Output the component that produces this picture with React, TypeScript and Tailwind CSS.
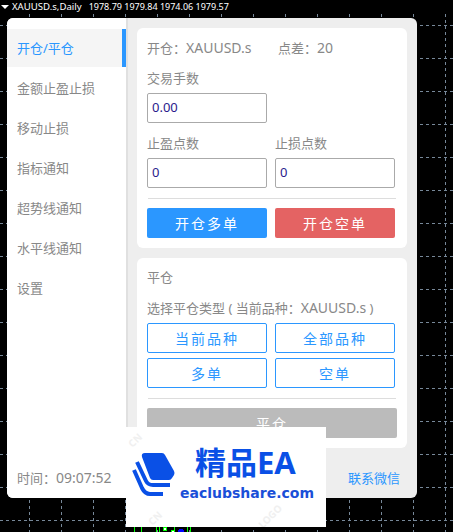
const font = { fontFamily: '"Noto Sans", "Noto Sans CJK SC", sans-serif' };

function Chart() {
  const xs = Array.from({ length: 14 }, (_, i) => 29 + i * 32);
  const ys = Array.from({ length: 16 }, (_, i) => 25 + i * 33);
  return (
    <svg className="absolute inset-0" width={453} height={532} shapeRendering="crispEdges">
      {xs.map((x) => (
        <line key={x} x1={x + 0.5} x2={x + 0.5} y1={14} y2={532} stroke="#778899" strokeDasharray="3 3" />
      ))}
      {ys.map((y) => (
        <line key={y} x1={0} x2={453} y1={y + 0.5} y2={y + 0.5} stroke="#778899" strokeDasharray="3 3" />
      ))}
      <path d="M134 527v5M141 527v5M156 527v5M159 527v5M174 527v5M187 527v5M190 527v5" stroke="#00ff00" fill="none" />
      <rect x="163.5" y="527.5" width="3" height="3" fill="#fff" stroke="#00ff00" />
      <rect x="171.5" y="530.5" width="3" height="3" fill="#fff" stroke="#00ff00" />
      <circle cx="181" cy="532" r="3" fill="#0000ff" />
    </svg>
  );
}

function Latin({ children }: { children: string }) {
  return <span className="text-[14px]">{children}</span>;
}

function SideItem({ label, active }: { label: string; active?: boolean }) {
  return (
    <div
      className={
        active
          ? "h-[38px] mb-[2px] pl-[10px] pt-px flex items-center bg-[#f5f5f5] text-[#2b97ff] border-r-4 border-[#2b97ff]"
          : "h-[38px] mb-[2px] pl-[10px] pt-px flex items-center text-[#888888]"
      }
    >
      {label}
    </div>
  );
}

function Field({ label, value }: { label: string; value: string }) {
  return (
    <div className="w-[120px]">
      <div className="h-[20px] leading-[20px] text-[#888888]">{label}</div>
      <div className="mt-[5px] h-[30px] border border-[#aaaaaa] rounded-[2px] pl-[4px] flex items-center text-[13px] text-[#2a1a8c]">
        {value}
      </div>
    </div>
  );
}

function OutlineBtn({ label }: { label: string }) {
  return (
    <div className="w-[120px] h-[30px] border border-[#2b97ff] rounded-[2px] flex items-center justify-center text-[#2b97ff] text-[14px] tracking-[2px]">
      {label}
    </div>
  );
}

function Logo() {
  return (
    <div className="absolute left-[126px] top-[427px] w-[200px] h-[100px] bg-white flex items-start pl-[6px] pt-[16px] overflow-hidden">
      <span className="absolute left-[2px] top-[6px] -rotate-45 text-[10px] font-bold text-[#f0f0f0]">CN</span>
      <span className="absolute left-[22px] top-[84px] -rotate-45 text-[10px] font-bold text-[#f0f0f0]">CN</span>
      <span className="absolute left-[130px] top-[82px] -rotate-45 text-[10px] font-bold text-[#f0f0f0]">LOGO</span>
      <svg width="44" height="47" viewBox="132 451 44 47" className="relative shrink-0 mt-[8px]">
        <path d="M145 453 H162 Q164 453 165 455 L174 471 Q175 473 174 475 L172 478 Q171 480 169 480 H153 Q151 480 150 478 L142 457 Q141 453 145 453Z" fill="#0a50e6" />
        <path d="M137 462 L146 481 Q148 485 153 485 H170" fill="none" stroke="#0a50e6" strokeWidth="4" />
        <path d="M134 470 L142 488 Q145 494 150 494 H163" fill="none" stroke="#0a50e6" strokeWidth="4" />
      </svg>
      <div className="relative ml-[4px] flex flex-col">
        <div className="ml-[15px] text-[#0a50e6] text-[31px] leading-[38px] font-bold">精品EA</div>
        <div className="mt-[4px] text-[#1a4fd8] text-[14px] leading-[16px] font-bold" style={{ fontFamily: '"DejaVu Sans", sans-serif' }}>
          eaclubshare.com
        </div>
      </div>
    </div>
  );
}

export default function App() {
  return (
    <div className="relative w-[453px] h-[532px] bg-black overflow-hidden text-[13px]" style={font}>
      <Chart />
      <div className="absolute left-0 top-0 w-full h-[13px] bg-black text-white text-[9.6px] leading-[12px] whitespace-pre flex items-center">
        <span className="ml-[1px] mr-[3px] w-0 h-0 border-x-[4px] border-x-transparent border-t-[4px] border-t-white" />
        <span className="ml-0">XAUUSD.s,Daily</span>
        <span className="ml-[7px] text-[9px]">1978.79 1979.84 1974.06 1979.57</span>
      </div>

      <div className="absolute left-[7px] top-[18px] w-[410px] h-[480px] rounded-[6px] overflow-hidden flex bg-[#eeeeee]">
        <aside className="w-[119px] bg-white pt-[11px] relative">
          <SideItem label="开仓/平仓" active />
          <SideItem label="金额止盈止损" />
          <SideItem label="移动止损" />
          <SideItem label="指标通知" />
          <SideItem label="超势线通知" />
          <SideItem label="水平线通知" />
          <SideItem label="设置" />
          <div className="absolute left-[10px] top-[451px] h-[18px] leading-[18px] text-[#888888]">时间：<Latin>09:07:52</Latin></div>
        </aside>
        <div className="w-[2px] bg-[#e0e0e0]" />
        <main className="flex-1 pl-[9px] pt-[10px] relative">
          <section className="w-[270px] h-[220px] bg-white rounded-[6px] px-[10px] pt-[10px]">
            <div className="flex h-[20px] leading-[20px] text-[#888888]">
              <span className="w-[131px]">开仓：<Latin>XAUUSD.s</Latin></span>
              <span>点差：<Latin>20</Latin></span>
            </div>
            <div className="mt-[10px] h-[20px] leading-[20px] text-[#888888]">交易手数</div>
            <div className="mt-[5px] w-[120px] h-[30px] border border-[#aaaaaa] rounded-[2px] pl-[4px] flex items-center text-[13px] text-[#2a1a8c]">0.00</div>
            <div className="mt-[10px] flex gap-[8px]">
              <Field label="止盈点数" value="0" />
              <Field label="止损点数" value="0" />
            </div>
            <div className="mt-[10px] h-px bg-[#dddddd] mx-px" />
            <div className="mt-[9px] flex gap-[8px]">
              <div className="w-[120px] h-[30px] rounded-[2px] bg-[#2b97ff] text-white text-[14px] tracking-[2px] flex items-center justify-center">开仓多单</div>
              <div className="w-[120px] h-[30px] rounded-[2px] bg-[#e46363] text-white text-[14px] tracking-[2px] flex items-center justify-center">开仓空单</div>
            </div>
          </section>
          <section className="mt-[10px] w-[270px] h-[190px] bg-white rounded-[6px] px-[10px] pt-[9px]">
            <div className="h-[20px] leading-[20px] text-[#888888]">平仓</div>
            <div className="mt-[11px] h-[20px] leading-[20px] text-[#888888] whitespace-pre">选择平仓类型 ( 当前品种：<Latin>XAUUSD.s</Latin> )</div>
            <div className="mt-[5px] grid grid-cols-[120px_120px] gap-x-[8px] gap-y-[5px]">
              <OutlineBtn label="当前品种" />
              <OutlineBtn label="全部品种" />
              <OutlineBtn label="多单" />
              <OutlineBtn label="空单" />
            </div>
            <div className="mt-[10px] h-px bg-[#dddddd] mx-px" />
            <div className="mt-[9px] h-[30px] rounded-[2px] bg-[#bbbbbb] text-white text-[14px] tracking-[2px] flex items-center justify-center">平仓</div>
          </section>
          <div className="absolute right-[17px] top-[451px] h-[18px] leading-[18px] text-[#2b97ff]">联系微信</div>
        </main>
      </div>
      <Logo />
    </div>
  );
}
